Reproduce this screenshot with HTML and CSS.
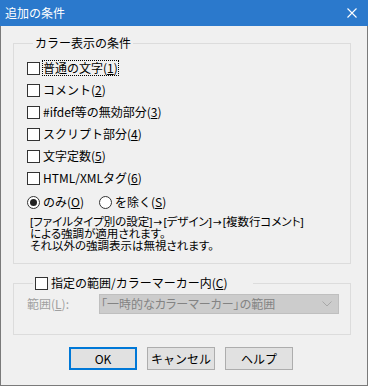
FILE: index.html
```html
<!DOCTYPE html>
<html lang="ja">
<head>
<meta charset="utf-8">
<link rel="stylesheet" href="styles.css">
</head>
<body>
<div class="window">
  <div class="titlebar">
    <span class="title">追加の条件</span>
    <svg class="close" width="10" height="10" viewBox="0 0 10 10"><path d="M0.5 0.5L9.5 9.5M9.5 0.5L0.5 9.5" stroke="#fff" stroke-width="1.1" fill="none"/></svg>
  </div>
  <div class="client">
    <fieldset class="group group1">
      <legend class="legend">カラー表示の条件</legend>
      <div class="row"><span class="check"></span><span class="label focus">普通の文字(<u>1</u>)</span></div>
      <div class="row"><span class="check"></span><span class="label">コメント(<u>2</u>)</span></div>
      <div class="row"><span class="check"></span><span class="label">#ifdef等の無効部分(<u>3</u>)</span></div>
      <div class="row"><span class="check"></span><span class="label">スクリプト部分(<u>4</u>)</span></div>
      <div class="row"><span class="check"></span><span class="label">文字定数(<u>5</u>)</span></div>
      <div class="row"><span class="check"></span><span class="label">HTML/XMLタグ(<u>6</u>)</span></div>
      <div class="row radios">
        <span class="radio-item"><span class="radio on"></span><span class="label">のみ(<u>O</u>)</span></span>
        <span class="radio-item"><span class="radio"></span><span class="label">を除く(<u>S</u>)</span></span>
      </div>
      <p class="note">[ファイルタイプ別の設定]<span class="arrow">→</span>[デザイン]<span class="arrow">→</span>[複数行コメント]<br>による強調が適用されます。<br>それ以外の強調表示は無視されます。</p>
    </fieldset>
    <fieldset class="group group2">
      <legend class="legend2"><span class="check"></span><span class="label">指定の範囲/カラーマーカー内(<u>C</u>)</span></legend>
      <div class="range-row">
        <span class="range-label">範囲(<u>L</u>):</span>
        <div class="combo">
          <span class="combo-text">「一時的なカラーマーカー」の範囲</span>
          <svg class="chev" width="10" height="6" viewBox="0 0 10 6"><path d="M0.5 0.5L5 5L9.5 0.5" stroke="#a8a8a8" stroke-width="1" fill="none"/></svg>
        </div>
      </div>
    </fieldset>
    <div class="buttons">
      <button class="btn default">OK</button>
      <button class="btn">キャンセル</button>
      <button class="btn">ヘルプ</button>
    </div>
  </div>
</div>
</body>
</html>
```
FILE: styles.css
```css
* { box-sizing: border-box; }
html, body { margin: 0; padding: 0; }
body {
  font-family: "Noto Sans CJK JP", "Noto Sans", sans-serif;
  font-size: 12px;
  color: #000;
}
.window {
  width: 368px;
  height: 386px;
  display: flex;
  flex-direction: column;
  background: #f0f0f0;
}
.titlebar {
  height: 26px;
  background: #2b79cc;
  color: #fff;
  display: flex;
  align-items: center;
  justify-content: space-between;
  padding: 0 11px 0 5px;
  flex: none;
}
.title { font-size: 12px; line-height: 14px; }
.close { display: block; }
.client {
  flex: 1;
  border: 1px solid #7a7a7a;
  border-top: none;
  padding: 10px 0 0 12px;
}
.group {
  margin: 0;
  border: 1px solid #dcdcdc;
  width: 338px;
  padding: 0 0 0 13px;
  min-width: 0;
}
.group1 { height: 228px; }
.legend {
  margin-left: 6px;
  padding: 0 2px;
  line-height: 14px;
}
.row {
  height: 22px;
  display: flex;
  align-items: center;
}
.group1 .row:first-of-type { margin-top: 7px; }
.check {
  width: 13px;
  height: 13px;
  border: 1px solid #333;
  background: #fff;
  flex: none;
}
.label {
  margin-left: 3px;
  line-height: 14px;
  white-space: nowrap;
}
.focus { outline: 1px dotted #000; outline-offset: 0; }
u { text-decoration: underline; text-underline-offset: 1px; }
.radios { margin-top: 2px; gap: 0; }
.radio-item { display: flex; align-items: center; width: 72px; }
.radio {
  width: 13px;
  height: 13px;
  border: 1px solid #333;
  border-radius: 50%;
  background: #fff;
  display: flex;
  align-items: center;
  justify-content: center;
  flex: none;
}
.radio.on::after {
  content: "";
  width: 7px;
  height: 7px;
  border-radius: 50%;
  background: #222;
}
.note {
  margin: 3px 0 0 3px;
  font-family: "Liberation Sans", "Noto Sans CJK JP", sans-serif;
  font-size: 11.5px;
  line-height: 12px;
  font-feature-settings: "palt";
  white-space: nowrap;
}
.arrow {
  font-family: "DejaVu Sans", sans-serif;
  font-size: 10.5px;
  padding: 0 1px;
}
.group2 {
  margin-top: 11px;
  height: 60px;
}
.legend2 {
  margin-left: 6px;
  padding: 0 0 0 2px;
  width: 220px;
  display: flex;
  align-items: center;
  height: 16px;
}
.range-row {
  display: flex;
  align-items: center;
  margin-top: 3px;
}
.range-label {
  color: #a0a0a0;
  width: 72px;
  line-height: 14px;
}
.combo {
  width: 240px;
  height: 20px;
  background: #cccccc;
  border: 1px solid #bfbfbf;
  display: flex;
  align-items: center;
  justify-content: space-between;
  padding: 0 6px 0 1px;
}
.combo-text { color: #838383; line-height: 14px; font-feature-settings: "palt"; }
.chev { display: block; }
.buttons {
  display: flex;
  gap: 10px;
  margin: 12px 0 0 56px;
}
.btn {
  width: 68px;
  height: 23px;
  background: #e1e1e1;
  border: 1px solid #adadad;
  font-family: inherit;
  font-size: 12px;
  padding: 0;
  color: #000;
}
.btn.default { border: 2px solid #0078d7; }
```
